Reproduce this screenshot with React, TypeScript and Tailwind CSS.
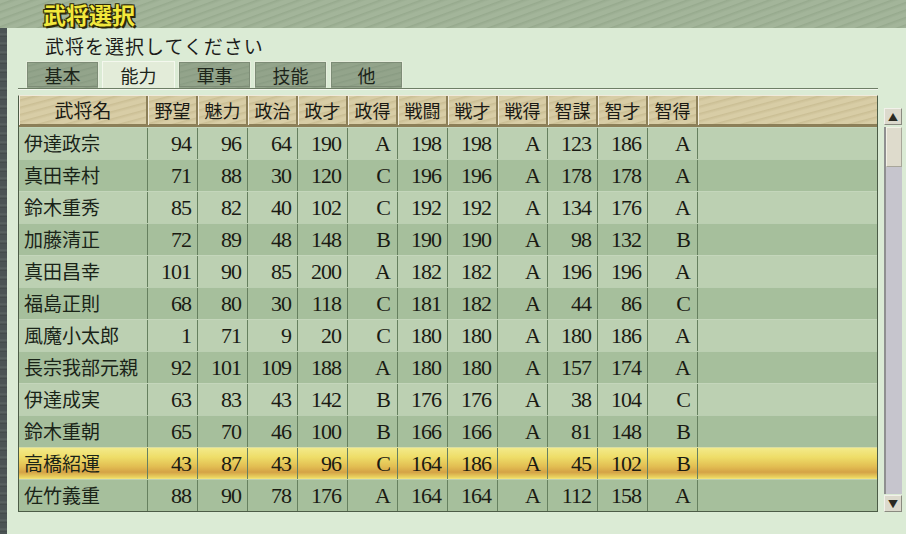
import React from "react";

type Officer = {
  name: string;
  stats: (number | string)[];
};

const headers = ["野望", "魅力", "政治", "政才", "政得", "戦闘", "戦才", "戦得", "智謀", "智才", "智得"];

const officers: Officer[] = [
  { name: "伊達政宗", stats: [94, 96, 64, 190, "A", 198, 198, "A", 123, 186, "A"] },
  { name: "真田幸村", stats: [71, 88, 30, 120, "C", 196, 196, "A", 178, 178, "A"] },
  { name: "鈴木重秀", stats: [85, 82, 40, 102, "C", 192, 192, "A", 134, 176, "A"] },
  { name: "加藤清正", stats: [72, 89, 48, 148, "B", 190, 190, "A", 98, 132, "B"] },
  { name: "真田昌幸", stats: [101, 90, 85, 200, "A", 182, 182, "A", 196, 196, "A"] },
  { name: "福島正則", stats: [68, 80, 30, 118, "C", 181, 182, "A", 44, 86, "C"] },
  { name: "風魔小太郎", stats: [1, 71, 9, 20, "C", 180, 180, "A", 180, 186, "A"] },
  { name: "長宗我部元親", stats: [92, 101, 109, 188, "A", 180, 180, "A", 157, 174, "A"] },
  { name: "伊達成実", stats: [63, 83, 43, 142, "B", 176, 176, "A", 38, 104, "C"] },
  { name: "鈴木重朝", stats: [65, 70, 46, 100, "B", 166, 166, "A", 81, 148, "B"] },
  { name: "高橋紹運", stats: [43, 87, 43, 96, "C", 164, 186, "A", 45, 102, "B"] },
  { name: "佐竹義重", stats: [88, 90, 78, 176, "A", 164, 164, "A", 112, 158, "A"] },
];

const tabs = ["基本", "能力", "軍事", "技能", "他"];
const SELECTED = 10;

const gothic = "font-['Noto_Sans_CJK_JP','Noto_Sans',sans-serif]";
const serif = "font-['Liberation_Serif','Noto_Sans_CJK_JP',serif]";

function Tab({ label, active }: { label: string; active: boolean }) {
  return (
    <div
      className={
        active
          ? "w-[73px] h-[27px] flex items-center justify-center border border-b-0 border-[#f4f8ee] bg-[#e3ecd9] text-[18px] text-[#1c241a]"
          : "w-[73px] h-[27px] flex items-center justify-center border border-b-0 border-[#e6eedd] outline outline-1 outline-[#7d8c76] -outline-offset-2 bg-[#92a38a] bg-[repeating-linear-gradient(165deg,#93a48b_0px,#93a48b_3px,#8a9c83_4px,#93a48b_6px)] text-[18px] text-[#1c241a]"
      }
    >
      {label}
    </div>
  );
}

function Row({ officer, index }: { officer: Officer; index: number }) {
  const selected = index === SELECTED;
  const rowBg = selected
    ? "bg-[linear-gradient(180deg,#f3ea8a_0%,#eedd68_30%,#e2bd52_60%,#d4a346_78%,#ebd561_95%,#f3e680_100%)]"
    : index % 2 === 0
    ? "bg-[#bcd0b2]"
    : "bg-[#a6bf9c]";

  return (
    <div className={`grid grid-cols-[129px_repeat(11,50px)_1fr] h-[32px] ${rowBg} border-t border-[#cadbc1]/60`}>
      <div className={`${gothic} flex items-center pl-[5px] text-[19px] text-[#1a2418] border-r border-[#66805f] whitespace-nowrap`}>
        {officer.name}
      </div>
      {officer.stats.map((v, i) => (
        <div
          key={i}
          className={`${serif} flex items-center justify-end pr-[6px] text-[22px] tracking-[-1px] text-[#1a1a12] border-r border-[#66805f] leading-none`}
        >
          {typeof v === "string" ? <span className="pr-[1px]">{v}</span> : v}
        </div>
      ))}
      <div />
    </div>
  );
}

function ScrollBar() {
  return (
    <div className="w-[18px] flex flex-col pt-[13px]">
      <div className="h-[17px] bg-[#dcdacd] border border-[#f2f1ea] border-r-[#8a8a80] border-b-[#8a8a80] flex items-center justify-center text-[10px] leading-none text-[#2b2a22]">
        ▲
      </div>
      <div className="flex-1 mt-[2px] flex flex-col border-l-2 border-[#8f9090] bg-[#c6c5cd]">
        <div className="h-[40px] bg-[#dedbcc] border border-[#f2f0e6] border-r-[#a8a69a] border-b-[#a8a69a]" />
      </div>
      <div className="h-[17px] mt-[1px] bg-[#dcdacd] border border-[#f2f1ea] border-r-[#8a8a80] border-b-[#8a8a80] flex items-center justify-center text-[10px] leading-none text-[#2b2a22]">
        ▼
      </div>
    </div>
  );
}

export default function App() {
  return (
    <div className={`${gothic} w-[906px] h-[534px] overflow-hidden flex flex-col bg-[#dbebd5]`}>
      {/* title bar */}
      <div className="h-[28px] shrink-0 flex items-center pl-[43px] bg-[#a1b398] bg-[repeating-linear-gradient(160deg,#a3b59a_0px,#a3b59a_3px,#97aa8e_4px,#a3b59a_7px)]">
        <span className="text-[23px] font-bold leading-[28px] text-[#f2e83c] [text-shadow:1px_1px_0_#2e2a08,-1px_-1px_0_#2e2a08,1px_-1px_0_#2e2a08,-1px_1px_0_#2e2a08,2px_2px_0_#2e2a08]">
          武将選択
        </span>
      </div>

      <div className="flex flex-1">
        {/* dark frame edge on the left */}
        <div className="w-[7px] bg-[#4b5454] bg-[repeating-linear-gradient(180deg,#4b5454_0px,#4b5454_5px,#5c6664_6px,#3f4747_9px)]" />

        <div className="flex-1 flex flex-col pl-[11px]">
          <div className="h-[33px] flex items-center pl-[27px] pt-[3px] text-[19px] text-[#1c1c1a] tracking-[1px]">
            武将を選択してください
          </div>

          {/* tabs */}
          <div className="flex gap-[3px] pl-[8px]">
            {tabs.map((t) => (
              <Tab key={t} label={t} active={t === "能力"} />
            ))}
          </div>
          <div className="w-[860px] h-[2px] bg-[#6e7e66] border-b border-[#f2f6ec]" />

          <div className="flex gap-[6px] mt-[5px]">
            {/* table */}
            <div className="w-[860px] border border-[#4c5c47] border-t-[#efeadb]">
              <div className="grid grid-cols-[129px_repeat(11,50px)_1fr] h-[31px] bg-[#d6cba3] bg-[repeating-linear-gradient(165deg,#d8cda6_0px,#d8cda6_3px,#cbbf95_4px,#d8cda6_7px)] border-b-[3px] border-[#8c7f58]">
                <div className="flex items-center justify-center text-[19px] text-[#1a1a14] border-r-2 border-[#8c7f58] border-l border-l-[#f4efe0]">
                  武将名
                </div>
                {headers.map((h) => (
                  <div
                    key={h}
                    className="flex items-center justify-center text-[18px] text-[#1a1a14] border-r-2 border-[#8c7f58] border-l border-l-[#f4efe0]"
                  >
                    {h}
                  </div>
                ))}
                <div className="border-l border-[#f4efe0]" />
              </div>
              {officers.map((o, i) => (
                <Row key={o.name} officer={o} index={i} />
              ))}
            </div>

            <ScrollBar />
          </div>
        </div>
      </div>
    </div>
  );
}
